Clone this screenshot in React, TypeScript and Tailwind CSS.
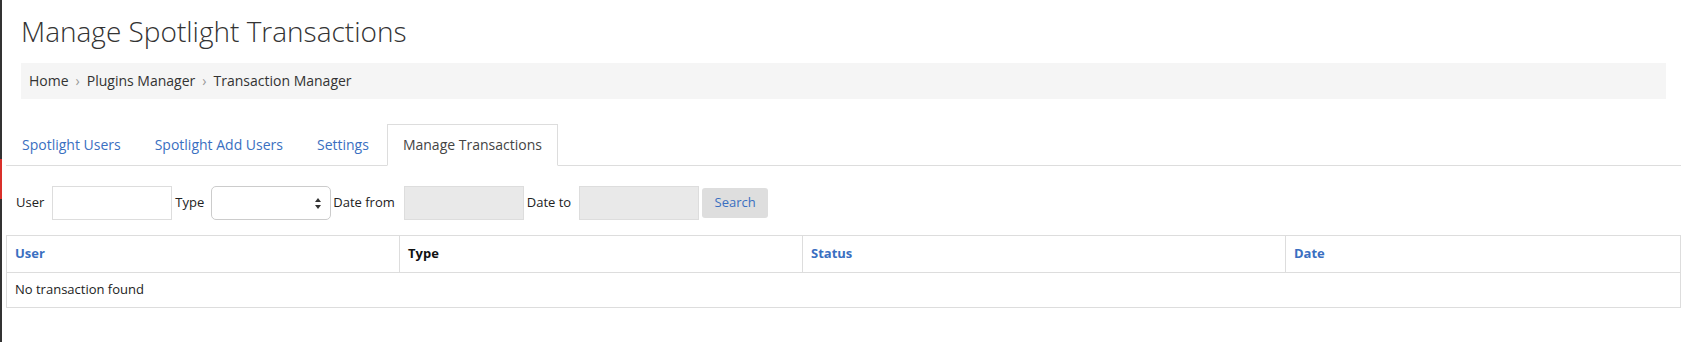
import React from "react";

const tabs = ["Spotlight Users", "Spotlight Add Users", "Settings", "Manage Transactions"];

function SelectArrows() {
  return (
    <svg width="6" height="11" viewBox="0 0 6 11" className="shrink-0">
      <path d="M3 0 L6 4 L0 4 Z" fill="#333" />
      <path d="M0 7 L6 7 L3 11 Z" fill="#333" />
    </svg>
  );
}

export default function App() {
  const active = "Manage Transactions";

  return (
    <div className="flex h-[342px] w-full bg-white font-['Open_Sans',sans-serif]">
      {/* edge of the neighbouring pane */}
      <div className="flex w-[2px] shrink-0 flex-col">
        <div className="h-[159px] bg-[#333]" />
        <div className="h-[40px] bg-[#d9302a]" />
        <div className="flex-1 bg-[#333]" />
      </div>

      <div className="min-w-0 flex-1 pl-[4px] pr-[2px]">
        <div className="px-[15px] pt-[14px]">
          <h1 className="text-[28px] font-light leading-[34px] text-[#333]">Manage Spotlight Transactions</h1>
          <div className="mt-[15px] flex h-[36px] items-center bg-[#f5f5f5] px-[8px] text-[14px] leading-[20px] text-[#333]">
            <span>Home</span>
            <span className="mx-[7px] text-[#999]">›</span>
            <span>Plugins Manager</span>
            <span className="mx-[7px] text-[#999]">›</span>
            <span>Transaction Manager</span>
          </div>
        </div>

        {/* Tabs */}
        <div className="mt-[25px] flex border-b border-[#ddd]">
          {tabs.map((t) => (
            <div
              key={t}
              className={
                t === active
                  ? "-mb-px mr-[2px] border border-[#ddd] border-b-white bg-white px-[15px] py-[10px] text-[14px] leading-[20px] text-[#444]"
                  : "-mb-px mr-[2px] border border-transparent px-[15px] py-[10px] text-[14px] leading-[20px] text-[#3a6fc1]"
              }
            >
              {t}
            </div>
          ))}
        </div>

        {/* Filters */}
        <div className="mt-[20px] flex h-[34px] items-center pl-[10px] text-[13px] text-[#222]">
          <span className="mr-[8px]">User</span>
          <div className="mr-[3px] h-[34px] w-[120px] border border-[#ddd] bg-white" />
          <span className="mr-[7px]">Type</span>
          <div className="mr-[2px] flex h-[34px] w-[120px] items-center justify-end rounded-[5px] border border-[#ccc] bg-white pr-[9px]">
            <SelectArrows />
          </div>
          <span className="mr-[9px]">Date from</span>
          <div className="mr-[3px] h-[34px] w-[120px] border border-[#ddd] bg-[#e9e9e9]" />
          <span className="mr-[8px]">Date to</span>
          <div className="mr-[3px] h-[34px] w-[120px] border border-[#ddd] bg-[#e9e9e9]" />
          <button className="h-[30px] w-[66px] rounded-[3px] bg-[#dedede] text-[13px] text-[#3a6fc1]">Search</button>
        </div>

        {/* Table */}
        <div className="mt-[15px] border border-[#ddd] text-[13px]">
          <div className="grid grid-cols-[392px_403px_483px_1fr] border-b border-[#ddd] font-bold">
            <div className="flex h-[36px] items-center px-[8px] text-[#3a6fc1]">User</div>
            <div className="flex h-[36px] items-center border-l border-[#ddd] px-[8px] text-[#111]">Type</div>
            <div className="flex h-[36px] items-center border-l border-[#ddd] px-[8px] text-[#3a6fc1]">Status</div>
            <div className="flex h-[36px] items-center border-l border-[#ddd] px-[8px] text-[#3a6fc1]">Date</div>
          </div>
          <div className="flex h-[34px] items-center px-[8px] text-[#222]">No transaction found</div>
        </div>
      </div>
    </div>
  );
}
